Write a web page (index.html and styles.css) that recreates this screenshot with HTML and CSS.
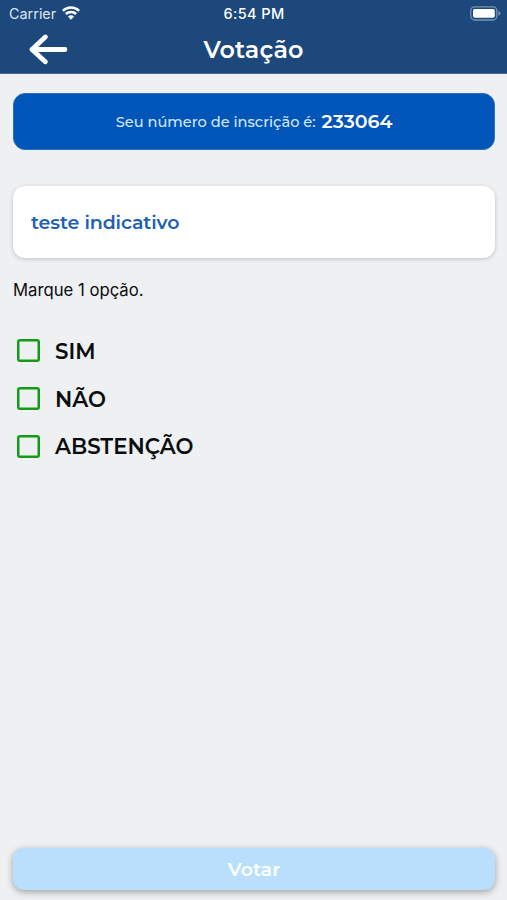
FILE: index.html
```html
<!DOCTYPE html>
<html lang="pt-BR">
<head>
<meta charset="utf-8">
<meta name="viewport" content="width=device-width, initial-scale=1">
<title>Votação</title>
<link rel="stylesheet" href="styles.css">
</head>
<body>
<header class="header">
  <div class="status">
    <div class="carrier"><span>Carrier</span>
      <svg width="18" height="14" viewBox="0 0 18 14" fill="none" stroke="#fff" stroke-width="2.5"><path d="M.9 4.9a11.6 11.6 0 0 1 16.2 0M3.8 8a7.5 7.5 0 0 1 10.4 0"/><path d="M9 13.8 5.9 10.6a4.5 4.5 0 0 1 6.2 0Z" fill="#fff" stroke="none"/></svg>
    </div>
    <time class="clock">6:54 PM</time>
    <svg class="battery" width="31" height="15" viewBox="0 0 31 15"><rect x=".8" y=".8" width="26" height="13.2" rx="3.8" fill="none" stroke="#7892b2" stroke-width="1.3"/><rect x="3" y="3" width="21.8" height="8.8" rx="1.8" fill="#fff"/><path d="M28.4 5.1q2.1.9 2.1 2.3t-2.1 2.3Z" fill="#7892b2"/></svg>
  </div>
  <div class="nav">
    <svg class="back" width="40" height="32" viewBox="0 0 40 32" fill="none" stroke="#fff" stroke-width="4.8" stroke-linecap="round" stroke-linejoin="round"><path d="M37 15.5H4M17.3 3 4 15.5l13.3 12.3"/></svg>
    <h1 class="title">Votação</h1>
  </div>
</header>
<main class="content">
  <section class="registration"><span class="reg-label">Seu número de inscrição é:</span><strong class="reg-number">233064</strong></section>
  <section class="question"><h2 class="question-text">teste indicativo</h2></section>
  <p class="hint">Marque 1 opção.</p>
  <div class="options">
    <div class="option"><span class="box"></span><span>SIM</span></div>
    <div class="option"><span class="box"></span><span>NÃO</span></div>
    <div class="option"><span class="box"></span><span>ABSTENÇÃO</span></div>
  </div>
  <button class="vote" type="button">Votar</button>
</main>
</body>
</html>
```
FILE: styles.css
```css
* { box-sizing: border-box; }
body {
  margin: 0;
  height: 900px;
  display: flex;
  flex-direction: column;
  background: #eef0f2;
  color: #0b0c0e;
  font-family: Montserrat, Inter, sans-serif;
  overflow: hidden;
}
svg { display: block; }
h1, h2, p { margin: 0; }
.header { height: 74px; background: #1c487b; color: #fff; border-bottom: 1px solid #486c95; }
.status {
  height: 27px;
  padding: 0 6px 0 9px;
  display: grid;
  grid-template-columns: 1fr auto 1fr;
  align-items: center;
  font: 400 14.4px/27px Inter, sans-serif;
}
.carrier { display: flex; align-items: center; gap: 6px; color: #dce5ef; }
.carrier svg { margin-top: -2px; }
.clock { font-weight: 500; font-size: 14.5px; letter-spacing: .4px; margin-left: -2px; }
.battery { justify-self: end; }
.nav { display: grid; grid-template-columns: 1fr auto 1fr; align-items: center; height: 46px; padding-left: 28px; padding-right: 28px; }
.title { font-size: 23.8px; font-weight: 600; line-height: 46px; letter-spacing: .15px; }
.content { flex: 1; display: flex; flex-direction: column; padding: 19px 12px 10px 13px; }
.registration {
  height: 57px;
  border-radius: 12px;
  background: #0055b8;
  border: 1px solid #2c71c4;
  color: #fff;
  display: flex;
  justify-content: center;
  align-items: center;
  gap: 6px;
}
.reg-label { font-size: 14.6px; font-weight: 500; color: #d6e7fb; letter-spacing: 0; }
.reg-number { font-size: 19px; font-weight: 600; }
.question {
  height: 72px;
  margin-top: 36px;
  padding-left: 18px;
  display: flex;
  align-items: center;
  border-radius: 12px;
  background: #fff;
  box-shadow: 0 1px 4px rgba(0, 0, 0, .2);
}
.question-text { font-size: 19px; font-weight: 600; color: #2260b0; letter-spacing: -.12px; }
.hint { margin-top: 21px; font: 400 16.7px/22px Inter, sans-serif; }
.options { margin-top: 26px; }
.option { display: flex; align-items: center; gap: 15.5px; height: 47.8px; padding-left: 3.5px; font-size: 21.3px; font-weight: 600; }
.box { width: 23px; height: 23px; border: 2px solid #129b18; border-radius: 3px; box-shadow: inset 0 0 0 .5px #129b18; }
.vote {
  height: 42px;
  margin-top: auto;
  border: 0;
  border-radius: 11px;
  background: #badffd;
  box-shadow: 0 2px 7px rgba(0, 0, 0, .34);
  color: #fff;
  font: 600 19px/42px Montserrat, Inter, sans-serif;
}
```
